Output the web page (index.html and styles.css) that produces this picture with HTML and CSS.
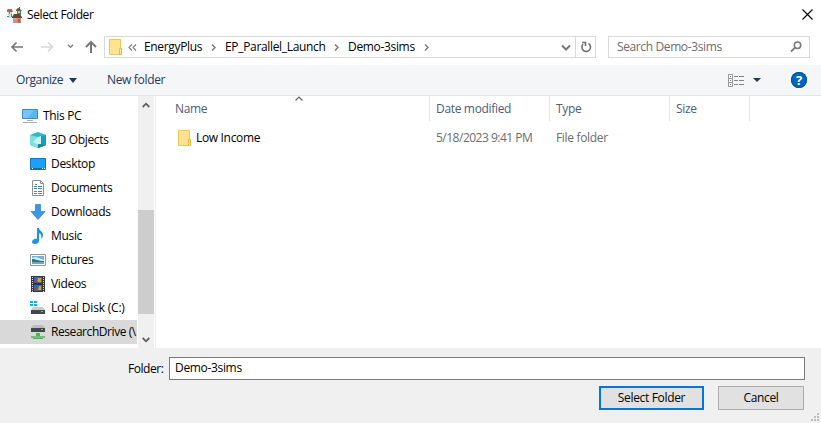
FILE: index.html
```html
<!DOCTYPE html>
<html lang="en">
<head>
<meta charset="utf-8">
<title>Select Folder</title>
<link rel="stylesheet" href="styles.css">
</head>
<body>
<div class="dialog">
  <header class="titlebar">
    <svg class="app-icon" width="16" height="16" viewBox="0 0 16 16"><path fill="#b5654a" d="M0 3l1-1h4l1 3H0z"/><path fill="#c3e2ef" d="M1 5h4v6H1z"/><path fill="#2b91bd" d="M2 5h1v2H2zM4 7h1v3H4zM0 9h2v1H0z"/><path fill="#7e4c3f" d="M9 3l2-2h1V0h1v2l2 2H9z"/><path fill="#32945a" d="M10 4h4v5h-4z"/><path fill="#9ce4ba" d="M11 4h2v2h-2z"/><path fill="#763e2e" d="M5 10l2-3h5l3 3v1H5z"/><path fill="#dc8c7b" d="M6 11h8v5H6z"/><path fill="#53d9e2" d="M7 11h2v2H7z"/><path fill="#b65d50" d="M11 12h2v4h-2z"/></svg>
    <h1 class="title">Select Folder</h1>
    <svg class="close" width="11" height="11" viewBox="0 0 11 11"><path d="M.5.5l10 10M10.500.5l-10 10" stroke="#000" stroke-width="1.1"/></svg>
  </header>
  <nav class="address-row">
    <svg class="nav-icons" width="92" height="22" viewBox="0 0 92 22" fill="none" stroke="#777" stroke-width="1.700"><path d="M6.500 6.500L2 11l4.500 4.500M2 11h11"/><path stroke="#d9d9d9" d="M38 6.500l4.500 4.500-4.500 4.500M42.500 11H31"/><path stroke="#858585" stroke-width="1.500" d="M58 8.700l2.500 2.500L63 8.700"/><path stroke-width="2" d="M76 11l5-5 5 5M81 6v11"/></svg>
    <div class="address">
      <svg class="folder" width="14" height="17" viewBox="0 0 14 17"><path fill="#ffe391" stroke="#ecc850" d="M1.500.5h11v15h-11z"/><path fill="#ffe391" stroke="#e8bd39" d="M11.500 9.500h2v6h-2z"/></svg>
      <svg class="back-crumbs" width="9" height="7" viewBox="0 0 9 7" fill="none" stroke="#777" stroke-width="1.100"><path d="M4 .5l-3 3 3 3M8 .5l-3 3 3 3"/></svg>
      <span class="crumb energy">EnergyPlus</span>
      <svg class="sep" width="5" height="7" viewBox="0 0 5 7"><path d="M1 .5l3 3-3 3"/></svg>
      <span class="crumb launch">EP_Parallel_Launch</span>
      <svg class="sep" width="5" height="7" viewBox="0 0 5 7"><path d="M1 .5l3 3-3 3"/></svg>
      <span class="crumb demo">Demo-3sims</span>
      <svg class="sep" width="5" height="7" viewBox="0 0 5 7"><path d="M1 .5l3 3-3 3"/></svg>
      <svg class="dropdown" width="10" height="7" viewBox="0 0 10 7"><path d="M1 1.500l4 4 4-4" fill="none" stroke="#777" stroke-width="2"/></svg>
      <span class="refresh"><svg width="12" height="12" viewBox="0 0 12 12" fill="none" stroke="#6e6e6e" stroke-width="1.600"><path d="M8.500 2.500A4.300 4.300 0 1 1 3 3.300M2 1.500h3.500V5"/></svg></span>
    </div>
    <div class="search"><span class="search-text">Search Demo-3sims</span><svg width="12" height="12" viewBox="0 0 12 12" fill="none" stroke="#777"><circle cx="7.500" cy="4.300" r="3.200" stroke-width="1.500"/><path stroke-width="1.800" d="M5 6.700L1 10.700"/></svg></div>
  </nav>
  <div class="toolbar">
    <span class="organize">Organize</span><svg class="triangle" width="8" height="5" viewBox="0 0 8 5"><path fill="#1e395b" d="M0 0h8L4 5z"/></svg>
    <span class="new-folder">New folder</span>
    <svg class="view" width="16" height="13" viewBox="0 0 16 13"><path fill="#fff" stroke="#999" d="M.5.5h4v12h-4zM.5 4.500h4M.5 8.500h4"/><path fill="#397fba" d="M2 2h1v1H2z"/><path fill="#5b98cc" d="M2 6h1v1H2z"/><path fill="#d65353" d="M2 10h1v1H2z"/><path stroke="#858585" d="M6 2.500h4m1 0h5M6 6.500h4m1 0h5M6 10.500h4m1 0h5"/></svg>
    <svg class="view-triangle" width="8" height="4" viewBox="0 0 8 4"><path fill="#1e395b" d="M0 0h8L4 4z"/></svg>
    <span class="help">?</span>
  </div>
  <main class="content">
    <ul class="tree">
      <li class="root"><svg width="16" height="16" viewBox="0 0 16 16"><path fill="#52b9f5" stroke="#4889b2" d="M.5 1.500h15v9H.5z"/><path fill="#72c6fb" d="M1 2h11L6 10H1z"/><path fill="#a1b1bb" d="M5 12h6v1H5zM1 14h14v1H1z"/></svg><span>This PC</span></li>
      <li><svg width="16" height="16" viewBox="0 0 16 16"><path fill="#35b6c6" d="M0 3l8-3 8 3v10l-8 3-8-3z"/><path fill="#7fdde6" d="M0 3l8 2v11l-8-3z"/><path fill="#17a0b2" d="M8 5l8-2v10l-8 3z"/><path fill="#c4f3f6" d="M8 5l3-1v8l-3 1-5-3z"/><path fill="#0d8797" d="M8 12l8 1-8 3z"/></svg><span>3D Objects</span></li>
      <li><svg width="16" height="16" viewBox="0 0 16 16"><path fill="#1e9ffa" stroke="#1177c5" d="M.5 2.500h15v11H.5z"/><path fill="#0870b8" d="M1 12h14v2H1z"/><path fill="#fff" d="M2 12h1v1H2zM12 12h1v1h-1zM14 12h1v1h-1z"/></svg><span>Desktop</span></li>
      <li><svg width="16" height="16" viewBox="0 0 16 16"><path fill="#fff" stroke="#8d9295" d="M2.500.5h8l3 3v12h-11z"/><path fill="none" stroke="#8d9295" d="M10.500.5v3h3"/><path stroke="#2688cb" d="M4 6.500h3M5 4.500h2M8 6.500h4M4 8.500h3M8 8.500h4"/><path stroke="#727d84" d="M4 11.500h3m1 0h4M4 13.500h3m1 0h4"/></svg><span>Documents</span></li>
      <li><svg width="16" height="16" viewBox="0 0 16 16"><path fill="#3a96e6" stroke="#2b80cb" stroke-width=".7" d="M5.500.5h5v7H15L8 15.500 1 7.500h4.500z"/></svg><span>Downloads</span></li>
      <li><svg width="16" height="16" viewBox="0 0 16 16"><path fill="#1597e8" d="M7 0h2c0 3 4 3 4 7 0 2-1 3-2 4 1-4 0-5-2-6v8c0 2-2 3-4 3s-3-1-3-2c0-2 3-4 5-3z"/></svg><span>Music</span></li>
      <li><svg width="16" height="16" viewBox="0 0 16 16"><path fill="#fff" stroke="#929a9e" d="M.5 2.500h15v11H.5z"/><path fill="#68b4e8" d="M2 4h12v8H2z"/><path fill="#d5eef8" d="M2 6l4-1 8 3v1H2z"/><path fill="#3b7183" d="M2 7c4 0 6 2 12 2v1H2z"/><path fill="#6ba8c3" d="M2 10h12v2H2z"/></svg><span>Pictures</span></li>
      <li><svg width="16" height="16" viewBox="0 0 16 16"><path fill="#353535" d="M1 0h14v16H1z"/><path fill="#286cc0" d="M4 1h8v6H4zM4 9h8v6H4z"/><path fill="#d3a636" d="M8 2h3v4H7zM9 10h2v4H8z"/><path fill="#9b4458" d="M4 5h4v2H4zM4 13h4v2H4z"/><path stroke="#ddd" stroke-dasharray="1 1" d="M2.500 1v15M13.500 1v15"/></svg><span>Videos</span></li>
      <li><svg width="16" height="16" viewBox="0 0 16 16"><path fill="#08b5ef" d="M0 1h3v2H0zM4 1h3v2H4zM0 4h3v2H0zM4 4h3v2H4z"/><path fill="#c9cdcf" d="M3 7h10l2 3H1z"/><path fill="#41484c" d="M1 10h14v4H1z"/><path fill="#48de65" d="M11 11h2v1h-2z"/></svg><span class="t-disk">Local Disk (C:)</span></li>
      <li class="selected"><svg width="16" height="16" viewBox="0 0 16 16"><path fill="#b9bec0" d="M3 1h10l2 3H1z"/><path fill="#41484c" d="M1 4h14v4H1z"/><path fill="#48de65" d="M11 5h2v1h-2z"/><path fill="#48b653" d="M6 9h4v3h3v3H3v-3h3z"/><path fill="#75bd78" d="M1 12h14v2H1z"/></svg><span class="t-research">ResearchDrive (\</span></li>
    </ul>
    <div class="scrollbar">
      <svg class="up" width="8" height="6" viewBox="0 0 8 6"><path d="M.700 5L4 1.700 7.300 5"/></svg>
      <div class="thumb"></div>
      <svg class="down" width="8" height="6" viewBox="0 0 8 6"><path d="M.700 1L4 4.300 7.300 1"/></svg>
    </div>
    <section class="files">
      <svg class="sort" width="8" height="5" viewBox="0 0 8 5"><path d="M.5 4.500L4 1l3.500 3.500" fill="none" stroke="#666" stroke-width="1.200"/></svg>
      <div class="file-grid heads"><span class="name"><b>Name</b></span><span><b>Date modified</b></span><span><b>Type</b></span><span><b>Size</b></span></div>
      <div class="file-grid file"><span class="file-name"><svg width="13" height="16" viewBox="0 0 13 16"><path fill="#ffe391" stroke="#ecc850" d="M.5.5h11v15H.5z"/><path fill="#ffe391" stroke="#e8bd39" d="M10.500 9.500h2v6h-2z"/></svg><b>Low Income</b></span><span><b class="t-date">5/18/2023 9:41 PM</b></span><span><b>File folder</b></span></div>
    </section>
  </main>
  <footer class="footer">
    <div class="folder-row"><label for="folder" class="label">Folder:</label><div class="field" id="folder"><span>Demo-3sims</span></div></div>
    <div class="actions"><button class="primary"><span>Select Folder</span></button><button><span>Cancel</span></button></div>
    <svg class="grip" width="8" height="8" viewBox="0 0 8 8"><path fill="#bdbdbd" d="M6 0h2v2H6zM3 3h2v2H3zM6 3h2v2H6zM0 6h2v2H0zM3 6h2v2H3zM6 6h2v2H6z"/></svg>
  </footer>
</div>
</body>
</html>
```
FILE: styles.css
```css
* { box-sizing: border-box; }
body { margin: 0; overflow: hidden; background: #fff; font: 12px/16px "Open Sans", "Noto Sans", sans-serif; letter-spacing: -.33px; color: #000; }
svg { display: block; flex: none; }
span, b, h1, label { white-space: nowrap; font-weight: 400; }
.dialog { width: 821px; height: 423px; display: flex; flex-direction: column; }
.titlebar { height: 29px; display: flex; align-items: center; padding: 0 8px 0 7px; }
.title { font-size: 12px; letter-spacing: -.4px; margin: 0 auto 0 4px; }
.close { margin-top: -1px; }
.address-row { height: 36px; display: flex; padding: 7px 11px 7px 10px; }
.nav-icons { margin-right: 2px; }
.address { width: 492px; height: 22px; border: 1px solid #d9d9d9; display: flex; align-items: center; padding-left: 3px; }
.back-crumbs { margin: 0 7px 0 6px; }
.energy { width: 58px; }
.launch { width: 100px; }
.demo { width: 67px; }
.sep { margin: 0 9px; }
.sep path { fill: none; stroke: #777; stroke-width: 1.4; }
.dropdown { margin: 1px 4px 0 auto; }
.refresh { width: 20px; height: 20px; border-left: 1px solid #d9d9d9; display: grid; place-items: center; }
.search { width: 202px; height: 22px; margin-left: 12px; border: 1px solid #d9d9d9; display: flex; align-items: center; justify-content: space-between; padding: 0 7px 0 8px; color: #6d6d6d; }
.search-text { letter-spacing: -.38px; }
.toolbar { height: 31px; background: #f5f6f7; border-bottom: 1px solid #e5e6e7; display: flex; align-items: center; padding: 0 14px 0 16px; color: #1e395b; }
.organize { width: 47px; letter-spacing: -.38px; }
.triangle { margin: 0 30px 0 6px; }
.view { margin-left: auto; }
.view-triangle { margin: 0 30px 0 9px; }
.help { width: 16px; height: 16px; border-radius: 50%; background: #0066c4; box-shadow: inset 0 0 0 1px #075092; color: white; text-align: center; font-weight: 700; font-size: 13px; }
.content { height: 252px; display: flex; }
.tree { width: 138px; margin: 0; padding: 8px 1px 0 0; list-style: none; overflow: hidden; }
.tree li { height: 24px; padding-left: 30px; display: flex; align-items: center; gap: 5px; overflow: hidden; }
.tree .root { padding-left: 22px; }
.tree .selected { background: #d9d9d9; }
.t-disk { letter-spacing: -.2px; }
.t-research { letter-spacing: -.43px; }
.scrollbar { width: 16px; background: #f0f0f0; display: flex; flex-direction: column; align-items: center; }
.scrollbar path { fill: none; stroke: #606060; stroke-width: 1.8; }
.up { margin: 6px 0 102px; }
.thumb { width: 16px; height: 104px; background: #cdcdcd; }
.down { margin-top: 23px; }
.files { flex: 1; margin-left: 1px; border-left: 1px solid #eee; position: relative; }
.sort { position: absolute; left: 139px; top: 0; }
.file-grid { display: grid; grid-template-columns: 274px 120px 120px 80px; }
.file-grid > span { display: flex; align-items: center; padding-left: 6px; }
.heads { height: 25px; color: #4c607a; }
.heads > span { border-right: 1px solid #e5e5e5; }
.file-grid .name { padding-left: 19px; }
.file { height: 24px; margin-top: 5px; color: #6d6d6d; }
.file .file-name { gap: 5px; padding-left: 22px; color: #000; }
.t-date { letter-spacing: -.5px; }
.footer { height: 75px; background: #f0f0f0; position: relative; padding-top: 9px; }
.folder-row { display: flex; align-items: center; padding-left: 128px; }
.label { width: 41px; letter-spacing: -.45px; }
.field { width: 636px; height: 23px; background: #fff; border: 1px solid #7a7a7a; padding: 2px 5px; }
.actions { display: flex; justify-content: flex-end; gap: 14px; padding: 6px 17px 0 0; }
button { font: inherit; letter-spacing: inherit; width: 86px; height: 24px; padding: 0; border: 1px solid #adadad; background: #e1e1e1; color: #000; }
.primary { width: 105px; border: 2px solid #0078d7; }
.grip { position: absolute; right: 2px; bottom: 2px; }
```
